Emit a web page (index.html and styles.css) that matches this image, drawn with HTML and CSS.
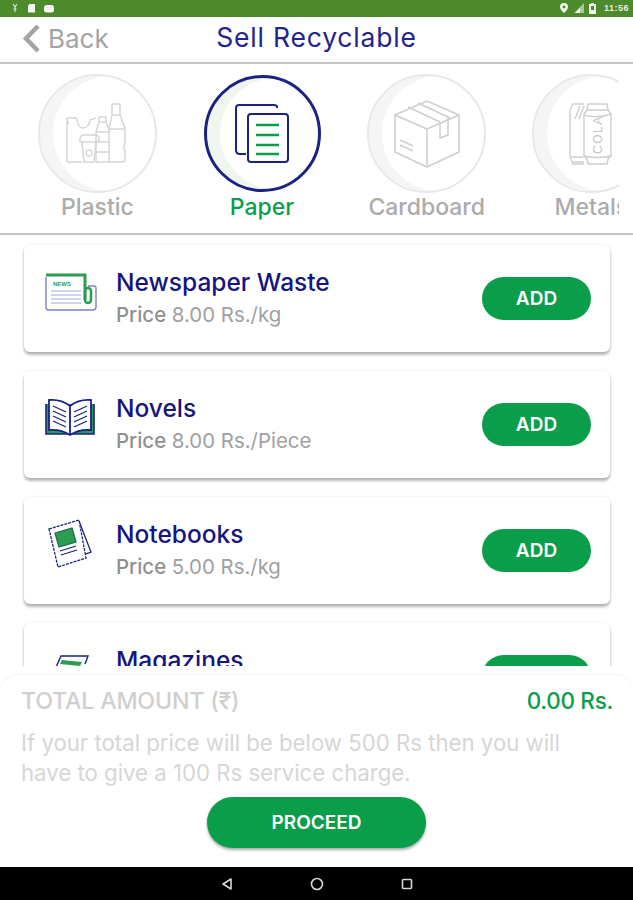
FILE: index.html
```html
<!DOCTYPE html>
<html lang="en">
<head>
  <meta charset="UTF-8">
  <meta name="viewport" content="width=device-width, initial-scale=1.0">
  <title>Sell Recyclable</title>
  <link rel="stylesheet" href="styles.css">
</head>
<body>
  <main class="screen">
    <div class="status-bar">
      <div class="status-group">
        <svg class="status-icon" width="8" height="10" viewBox="0 0 8 10"><path d="M2 1l2 3 2-3M4 4v5M2.500 6h3" fill="none" stroke="#dfe9d8" stroke-width="1.200"/></svg>
        <svg class="status-icon" width="9" height="10" viewBox="0 0 9 10"><path d="M2.500 1H8v8.500H1V3z" fill="#f4f7f1"/></svg>
        <svg class="status-icon" width="10" height="9" viewBox="0 0 10 9"><rect y="1" width="10" height="7.500" rx="2.500" fill="#f4f7f1"/></svg>
      </div>
      <div class="status-group status-right">
        <svg width="8" height="10" viewBox="0 0 8 10"><path d="M4 0a4 4 0 0 1 4 4c0 2.500-4 6-4 6S0 6.500 0 4a4 4 0 0 1 4-4z" fill="#f4f7f1"/><circle cx="4" cy="4" r="1.400" fill="#4c8a2c"/></svg>
        <svg width="11" height="10" viewBox="0 0 11 10"><path d="M11 0v10H1z" fill="#a9c79a"/><path d="M7 5v5H2z" fill="#f4f7f1"/></svg>
        <svg width="7" height="11" viewBox="0 0 7 11"><path d="M2 0h3v1h2v10H0V1h2z" fill="#f4f7f1"/><rect x="2" y="3" width="3" height="4" fill="#4c8a2c"/></svg>
        <span class="status-time">11:56</span>
      </div>
    </div>

    <header class="top-bar">
      <div class="back">
        <svg width="19" height="31" viewBox="0 0 19 31"><path d="M16 3L4 15.500 16 28" fill="none" stroke="#a3a3a3" stroke-width="4.500"/></svg>
        <span>Back</span>
      </div>
      <h1 class="page-title">Sell Recyclable</h1>
    </header>

    <nav class="categories">
      <div class="category-track">
        <div class="category">
          <div class="circle">
            <svg width="62" height="62" viewBox="0 0 62 62" fill="none" stroke="#d6d6d6" stroke-width="1.500" stroke-linejoin="round">
              <path d="M46 1h8v11h-8zM46 12l-3 13v34M54 12l5 13v14l-1 5 1 5v7q0 3-3 3H44"/>
              <path d="M43 26h16"/>
              <path d="M33 14h7v5h-7zM33 19l-3 10v30h14M40 19l4 10M30 29h13M30 39h13M30 49h13"/>
              <path d="M1 15h9l1 2q1 8 6 8 6 0 7-8l6-2M1 15v42q0 2 2 2h13M1 15q0 4 2 6"/>
              <path d="M14 36q0-4 4-4h11q4 0 4 4v3H14zM16 39l2 20h10l2-20"/>
              <circle cx="23" cy="50" r="3"/>
            </svg>
          </div>
          <span class="category-label">Plastic</span>
        </div>
        <div class="category is-active">
          <div class="circle">
            <svg width="56" height="60" viewBox="0 0 56 60" fill="none" stroke-linejoin="round">
              <path d="M43 4V3q0-2-3-2H5Q2 1 2 4v42q0 4 4 4h6" stroke="#1a2285" stroke-width="2"/>
              <rect x="14" y="10" width="40" height="48" rx="3" stroke="#1a2285" stroke-width="2"/>
              <path d="M22 21h23M22 31h23M22 41h23M22 50h23" stroke="#0a9e4a" stroke-width="2.400"/>
            </svg>
          </div>
          <span class="category-label">Paper</span>
        </div>
        <div class="category">
          <div class="circle">
            <svg width="66" height="68" viewBox="0 0 66 68" fill="none" stroke="#cfcfcf" stroke-width="1.600" stroke-linejoin="round">
              <path d="M33 1l32 14v37L33 67 1 52V15z"/>
              <path d="M1 15l32 14 32-14M33 29v38"/>
              <path d="M14 7l32 15M24 3l32 15"/>
              <path d="M46 22v16l8-3V18"/>
              <path d="M6 40l13 6M6 45l13 6"/>
            </svg>
          </div>
          <span class="category-label">Cardboard</span>
        </div>
        <div class="category">
          <div class="circle">
            <svg class="cans" width="44" height="64" viewBox="0 0 44 64" fill="none" stroke="#cfcfcf" stroke-width="1.500" stroke-linejoin="round">
              <path d="M15 2H4L1 8v47l3 7h11"/>
              <path d="M2 55h12M6 17l5-13M10 17l5-13M3 60h12"/>
              <path d="M19 2h19l1 6 3 4v42l-3 3-1 5H19l-1-5-3-3V12l3-4z"/>
              <path d="M18 8h21M15 13q14 4 27-1M15 54q14 3 27 0"/>
              <text class="cola-text" transform="translate(33 52) rotate(-90)">COLA</text>
            </svg>
          </div>
          <span class="category-label">Metals</span>
        </div>
      </div>
    </nav>

    <section class="items">
      <article class="item">
        <div class="item-icon">
          <svg width="52" height="40" viewBox="0 0 52 40" fill="none">
            <path d="M1 5v30q0 3 3 3h44q3 0 3-3V16q0-2-2-2h-6" stroke="#7d83bd" stroke-width="1.400"/>
            <path d="M1 3h39v25" stroke="#2d9c52" stroke-width="3"/>
            <rect x="40" y="16" width="6" height="15" rx="3" stroke="#2d9c52" stroke-width="2.500"/>
            <text class="news-text" x="8" y="14">NEWS</text>
            <path d="M6 19h30M6 23h30M6 27h30M6 31h30" stroke="#a4a8d2" stroke-width="1.200"/>
          </svg>
        </div>
        <div class="item-text">
          <h2 class="item-name">Newspaper Waste</h2>
          <p class="item-price"><b>Price</b> 8.00 Rs./kg</p>
        </div>
        <button class="btn-add">ADD</button>
      </article>

      <article class="item">
        <div class="item-icon">
          <svg width="50" height="40" viewBox="0 0 50 40" fill="none">
            <path d="M1 6v30h48V6" fill="#2d9c52" stroke="#1a2285" stroke-width="1.600"/>
            <path d="M25 8Q16 1 4 2v30q12-1 21 5 9-6 21-5V2Q34 1 25 8zM25 8v29" fill="#fff" stroke="#1a2285" stroke-width="1.800"/>
            <path d="M8 8l13 6M8 13l13 6M8 18l13 6M8 23l13 6M29 14l13-6M29 19l13-6M29 24l13-6M29 29l13-6" stroke="#1a2285" stroke-width="1.300"/>
          </svg>
        </div>
        <div class="item-text">
          <h2 class="item-name">Novels</h2>
          <p class="item-price"><b>Price</b> 8.00 Rs./Piece</p>
        </div>
        <button class="btn-add">ADD</button>
      </article>

      <article class="item">
        <div class="item-icon icon-notebook">
          <svg width="46" height="52" viewBox="0 0 46 52" fill="none" stroke="#1a2285" stroke-width="1.300">
            <path d="M32 3l12 31-8 3"/>
            <path d="M2 11L32 2l7 38-28 9z" fill="#fff" stroke-dasharray="3 1"/>
            <path d="M8 15l17-5 4 14-17 5z" fill="#2d9c52" stroke="#1d6a55"/>
            <path d="M13 33l16-5M14 37l16-5"/>
          </svg>
        </div>
        <div class="item-text">
          <h2 class="item-name">Notebooks</h2>
          <p class="item-price"><b>Price</b> 5.00 Rs./kg</p>
        </div>
        <button class="btn-add">ADD</button>
      </article>

      <article class="item">
        <div class="item-icon icon-magazine">
          <svg width="40" height="44" viewBox="0 0 40 44" fill="none">
            <path d="M1 26L9 8h27l-3 8" stroke="#1a2285" stroke-width="1.400"/>
            <path d="M10 12l20 2-2 4-20-2z" fill="#2d9c52"/>
            <path d="M30 18h8l-2 6h-8z" fill="#2d9c52"/>
          </svg>
        </div>
        <div class="item-text">
          <h2 class="item-name">Magazines</h2>
        </div>
        <button class="btn-add">ADD</button>
      </article>
    </section>

    <footer class="summary">
      <div class="total-row">
        <span class="total-label">TOTAL AMOUNT (₹)</span>
        <span class="total-value">0.00 Rs.</span>
      </div>
      <p class="notice">If your total price will be below 500 Rs then you will have to give a 100 Rs service charge.</p>
      <button class="btn-proceed">PROCEED</button>
    </footer>

    <div class="nav-bar">
      <svg width="14" height="14" viewBox="0 0 14 14"><path d="M11 2v10L3 7z" fill="none" stroke="#d8d8d8" stroke-width="1.600" stroke-linejoin="round"/></svg>
      <svg width="14" height="14" viewBox="0 0 14 14"><circle cx="7" cy="7" r="5.500" fill="none" stroke="#d8d8d8" stroke-width="1.600"/></svg>
      <svg width="14" height="14" viewBox="0 0 14 14"><rect x="2.500" y="2.500" width="9" height="9" rx="1" fill="none" stroke="#d8d8d8" stroke-width="1.600"/></svg>
    </div>
  </main>
</body>
</html>
```

FILE: styles.css
```css
* {
  box-sizing: border-box;
}
body {
  margin: 0;
  background: #fff;
  font-family: Inter, "Liberation Sans", sans-serif;
}
.screen {
  height: 900px;
  display: flex;
  flex-direction: column;
  overflow: hidden;
}
.status-bar {
  height: 17px;
  flex: none;
  padding: 0 4px 1px 11px;
  background: #4c8a2c;
  display: flex;
  justify-content: space-between;
  align-items: center;
}
.status-group {
  display: flex;
  align-items: center;
  gap: 8px;
}
.status-right {
  gap: 5px;
}
.status-time {
  color: #e8f0e2;
  font: bold 9px "Liberation Sans", sans-serif;
  letter-spacing: .5px;
  margin-left: 3px;
}
.top-bar {
  height: 47px;
  flex: none;
  position: relative;
  padding: 0 0 5px 0;
  border-bottom: 2px solid #c4c4c4;
  display: flex;
  align-items: center;
  justify-content: center;
}
.back {
  position: absolute;
  left: 22px;
  top: 6px;
  display: flex;
  align-items: center;
  gap: 7px;
  color: #a3a3a3;
  font-size: 26px;
}
.page-title {
  margin: 0;
  color: #23238e;
  font-size: 26.500px;
  font-weight: 400;
  letter-spacing: .8px;
}
.categories {
  height: 171px;
  flex: none;
  padding: 10px 14px 0 15px;
  border-bottom: 2px solid #c4c4c4;
}
.category-track {
  display: flex;
  overflow: hidden;
}
.category {
  flex: none;
  width: 164.700px;
  display: flex;
  flex-direction: column;
  align-items: center;
}
.circle {
  width: 119px;
  height: 119px;
  flex: none;
  border: 2px solid #e8e8e8;
  border-radius: 50%;
  box-shadow: inset 13px 0 0 #f5f5f5;
  background: #fff;
  display: flex;
  align-items: center;
  justify-content: center;
}
.category-label {
  color: #ababab;
  font-size: 23px;
  font-weight: 500;
  line-height: 29px;
  white-space: nowrap;
}
.is-active .circle {
  border: 3px solid #1a2285;
  box-shadow: inset 13px 0 0 #eef6ee;
  width: 117px;
  height: 117px;
  margin: 1px 0;
}
.is-active .category-label {
  color: #0a9e4a;
}
.cola-text {
  font: 500 12px "Liberation Sans", sans-serif;
  fill: #c4c4c4;
  stroke: none;
  letter-spacing: 1.500px;
}
.items {
  flex: 1;
  min-height: 0;
  overflow: hidden;
  padding: 10px 23px 0 24px;
  display: flex;
  flex-direction: column;
  gap: 19px;
}
.item {
  height: 107px;
  flex: none;
  padding-right: 19px;
  background: #fff;
  border-radius: 6px;
  box-shadow: 0 3px 3px rgba(0, 0, 0, .28), 0 0 3px rgba(0, 0, 0, .1);
  display: flex;
  align-items: center;
}
.item-icon {
  width: 92px;
  flex: none;
  padding: 0 0 14px 21px;
  display: flex;
  align-items: center;
}
.icon-notebook {
  padding-left: 23px;
}
.icon-magazine {
  padding-left: 28px;
}
.item-text {
  flex: 1;
  height: 64px;
  margin-bottom: 2px;
}
.item-name {
  margin: 0;
  color: #15157f;
  font-size: 24.500px;
  font-weight: 500;
  line-height: 33px;
}
.item-price {
  margin: 0;
  color: #a0a0a0;
  font-size: 20.400px;
  line-height: 31px;
  white-space: nowrap;
}
.item-price b {
  color: #8f8f8f;
  font-weight: 500;
}
.news-text {
  font: bold 6px "Liberation Sans", sans-serif;
  fill: #2d9c52;
}
.btn-add {
  width: 109px;
  height: 43px;
  flex: none;
  border: 0;
  border-radius: 22px;
  background: #0a9e4a;
  color: #fff;
  font: 600 19px Inter, sans-serif;
}
.summary {
  height: 192px;
  flex: none;
  margin-top: 9px;
  padding: 9px 20px 0 21px;
  background: #fff;
  border-radius: 18px 18px 0 0;
  box-shadow: 0 -1px 2px rgba(0, 0, 0, .05);
  display: flex;
  flex-direction: column;
}
.total-row {
  display: flex;
  justify-content: space-between;
  align-items: center;
  line-height: 34px;
}
.total-label {
  color: #cfcfcf;
  font-size: 23.200px;
  font-weight: 500;
  letter-spacing: -.2px;
}
.total-value {
  color: #0a9e4a;
  font-size: 22.500px;
  font-weight: 500;
  letter-spacing: -.3px;
}
.notice {
  margin: 10px 0 0;
  padding-right: 20px;
  color: #d6d6d6;
  font-size: 22.200px;
  line-height: 30px;
}
.btn-proceed {
  width: 219px;
  height: 51px;
  flex: none;
  margin: 9px auto 0;
  position: relative;
  right: .5px;
  border: 0;
  border-radius: 26px;
  background: #0a9e4a;
  color: #fff;
  font: 600 19px Inter, sans-serif;
  box-shadow: 0 2px 3px rgba(0, 0, 0, .35);
}
.nav-bar {
  height: 33px;
  flex: none;
  background: #000;
  display: flex;
  justify-content: center;
  align-items: center;
  gap: 76px;
}
```
